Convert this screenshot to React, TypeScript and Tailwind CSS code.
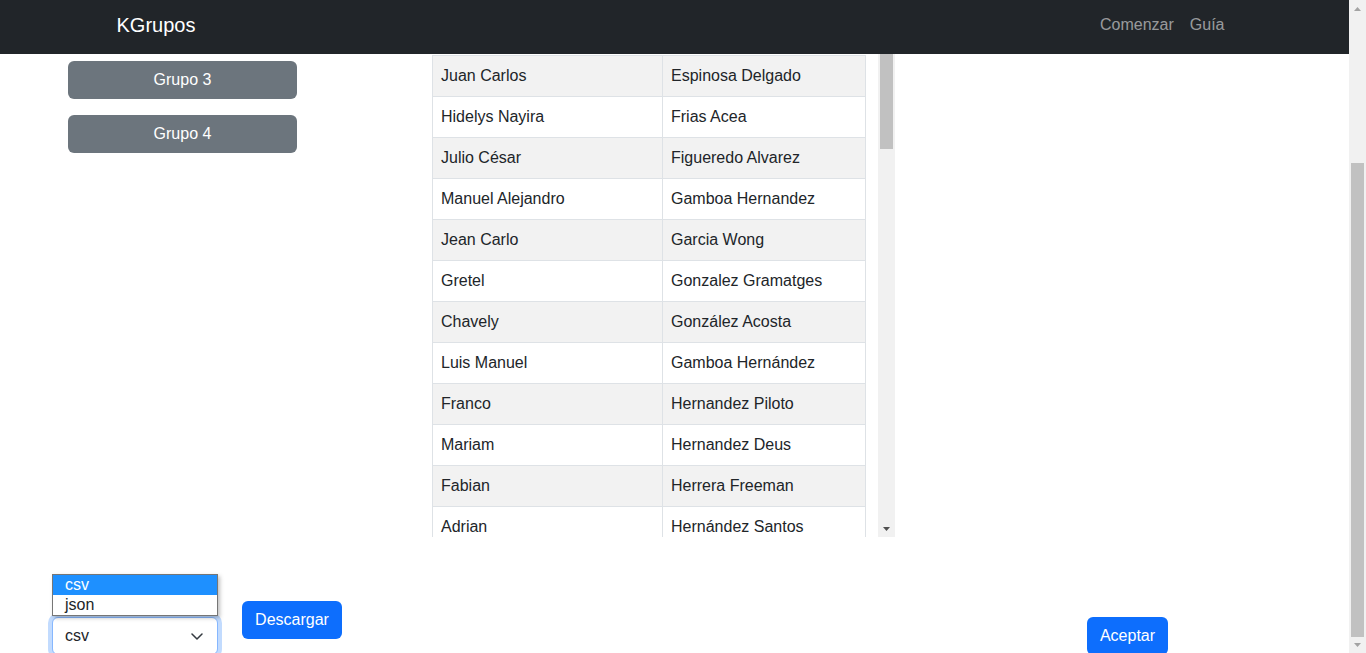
import { useState } from "react";

type Persona = { nombre: string; apellidos: string };

const personas: Persona[] = [
  { nombre: "Juan Carlos", apellidos: "Espinosa Delgado" },
  { nombre: "Hidelys Nayira", apellidos: "Frias Acea" },
  { nombre: "Julio César", apellidos: "Figueredo Alvarez" },
  { nombre: "Manuel Alejandro", apellidos: "Gamboa Hernandez" },
  { nombre: "Jean Carlo", apellidos: "Garcia Wong" },
  { nombre: "Gretel", apellidos: "Gonzalez Gramatges" },
  { nombre: "Chavely", apellidos: "González Acosta" },
  { nombre: "Luis Manuel", apellidos: "Gamboa Hernández" },
  { nombre: "Franco", apellidos: "Hernandez Piloto" },
  { nombre: "Mariam", apellidos: "Hernandez Deus" },
  { nombre: "Fabian", apellidos: "Herrera Freeman" },
  { nombre: "Adrian", apellidos: "Hernández Santos" },
];

const grupos = ["Grupo 3", "Grupo 4"];

function Arrow({ up = false, color = "#505050" }: { up?: boolean; color?: string }) {
  return (
    <svg width="7" height="4" viewBox="0 0 7 4" aria-hidden>
      <path d={up ? "M0 4 L3.5 0 L7 4 Z" : "M0 0 L7 0 L3.5 4 Z"} fill={color} />
    </svg>
  );
}

function Navbar() {
  return (
    <nav className="flex h-[54px] shrink-0 items-center bg-[#212529] pb-1">
      <div className="mx-auto flex w-[1140px] items-center px-3">
        <span className="text-[20px] text-white">KGrupos</span>
        <div className="ml-auto flex">
          <a className="px-2 text-base text-[rgba(255,255,255,0.55)]">Comenzar</a>
          <a className="px-2 text-base text-[rgba(255,255,255,0.55)]">Guía</a>
        </div>
      </div>
    </nav>
  );
}

function TablaPersonas() {
  return (
    <div className="flex h-[483px] w-[463px] overflow-hidden">
      <div className="w-[434px] pt-px">
        <table className="w-[434px] border-collapse text-base text-[#212529]">
          <tbody>
            {personas.map((p, i) => (
              <tr key={p.nombre} className={i % 2 === 0 ? "bg-[#f2f2f2]" : "bg-white"}>
                <td className="h-[41px] w-[230px] border border-[#dee2e6] px-2 leading-6">{p.nombre}</td>
                <td className="h-[41px] border border-[#dee2e6] px-2 leading-6">{p.apellidos}</td>
              </tr>
            ))}
          </tbody>
        </table>
      </div>
      <div className="ml-auto flex w-[17px] flex-col bg-[#f1f1f1]">
        <div className="mx-[2px] h-[95px] bg-[#c1c1c1]" />
        <div className="mt-auto flex h-[17px] items-center justify-center">
          <Arrow />
        </div>
      </div>
    </div>
  );
}

function SelectorFormato() {
  const [formato] = useState("csv");
  return (
    <div className="relative mt-[80px] ml-[52px]">
      <div className="absolute bottom-full left-0 mb-px w-[166px] border border-[#767676] bg-white text-base leading-5 shadow-[2px_2px_4px_rgba(0,0,0,0.25)]">
        <div className="bg-[#1e90ff] pl-3 text-white">csv</div>
        <div className="pl-3 text-[#212529]">json</div>
      </div>
      <div className="flex h-[38px] w-[166px] items-center rounded-[6px] border border-[#86b7fe] bg-white pr-[14px] pl-3 text-base text-[#212529] shadow-[0_0_0_4px_rgba(13,110,253,0.25)]">
        <span>{formato}</span>
        <svg className="ml-auto" width="12" height="8" viewBox="0 0 12 8" aria-hidden>
          <path d="m1 2 5 5 5-5" fill="none" stroke="#343a40" strokeWidth="1.5" strokeLinecap="round" strokeLinejoin="round" />
        </svg>
      </div>
    </div>
  );
}

export default function App() {
  return (
    <div className="flex h-[653px] w-[1366px] overflow-hidden bg-white font-['Liberation_Sans',Arial,sans-serif]">
      <div className="flex w-[1349px] flex-col">
        <Navbar />
        <div className="flex h-[483px]">
          <div className="ml-[68px] flex w-[229px] flex-col gap-4 pt-[7px]">
            {grupos.map((g) => (
              <button
                key={g}
                className="h-[38px] w-[229px] rounded-[6px] bg-[#6c757d] text-base text-white"
              >
                {g}
              </button>
            ))}
          </div>
          <div className="ml-[135px]">
            <TablaPersonas />
          </div>
        </div>
        <div className="flex items-start">
          <SelectorFormato />
          <button className="mt-[64px] ml-6 h-[38px] w-[100px] rounded-[6px] bg-[#0d6efd] text-base text-white">
            Descargar
          </button>
          <button className="mt-[80px] ml-[745px] h-[38px] w-[81px] rounded-[6px] bg-[#0d6efd] text-base text-white">
            Aceptar
          </button>
        </div>
      </div>
      <div className="flex w-[17px] flex-col bg-[#f1f1f1]">
        <div className="flex h-[17px] items-center justify-center">
          <Arrow up color="#a3a3a3" />
        </div>
        <div className="mx-[2px] mt-[146px] h-[474px] bg-[#c1c1c1]" />
        <div className="mt-auto flex h-[16px] items-center justify-center">
          <Arrow color="#a3a3a3" />
        </div>
      </div>
    </div>
  );
}
